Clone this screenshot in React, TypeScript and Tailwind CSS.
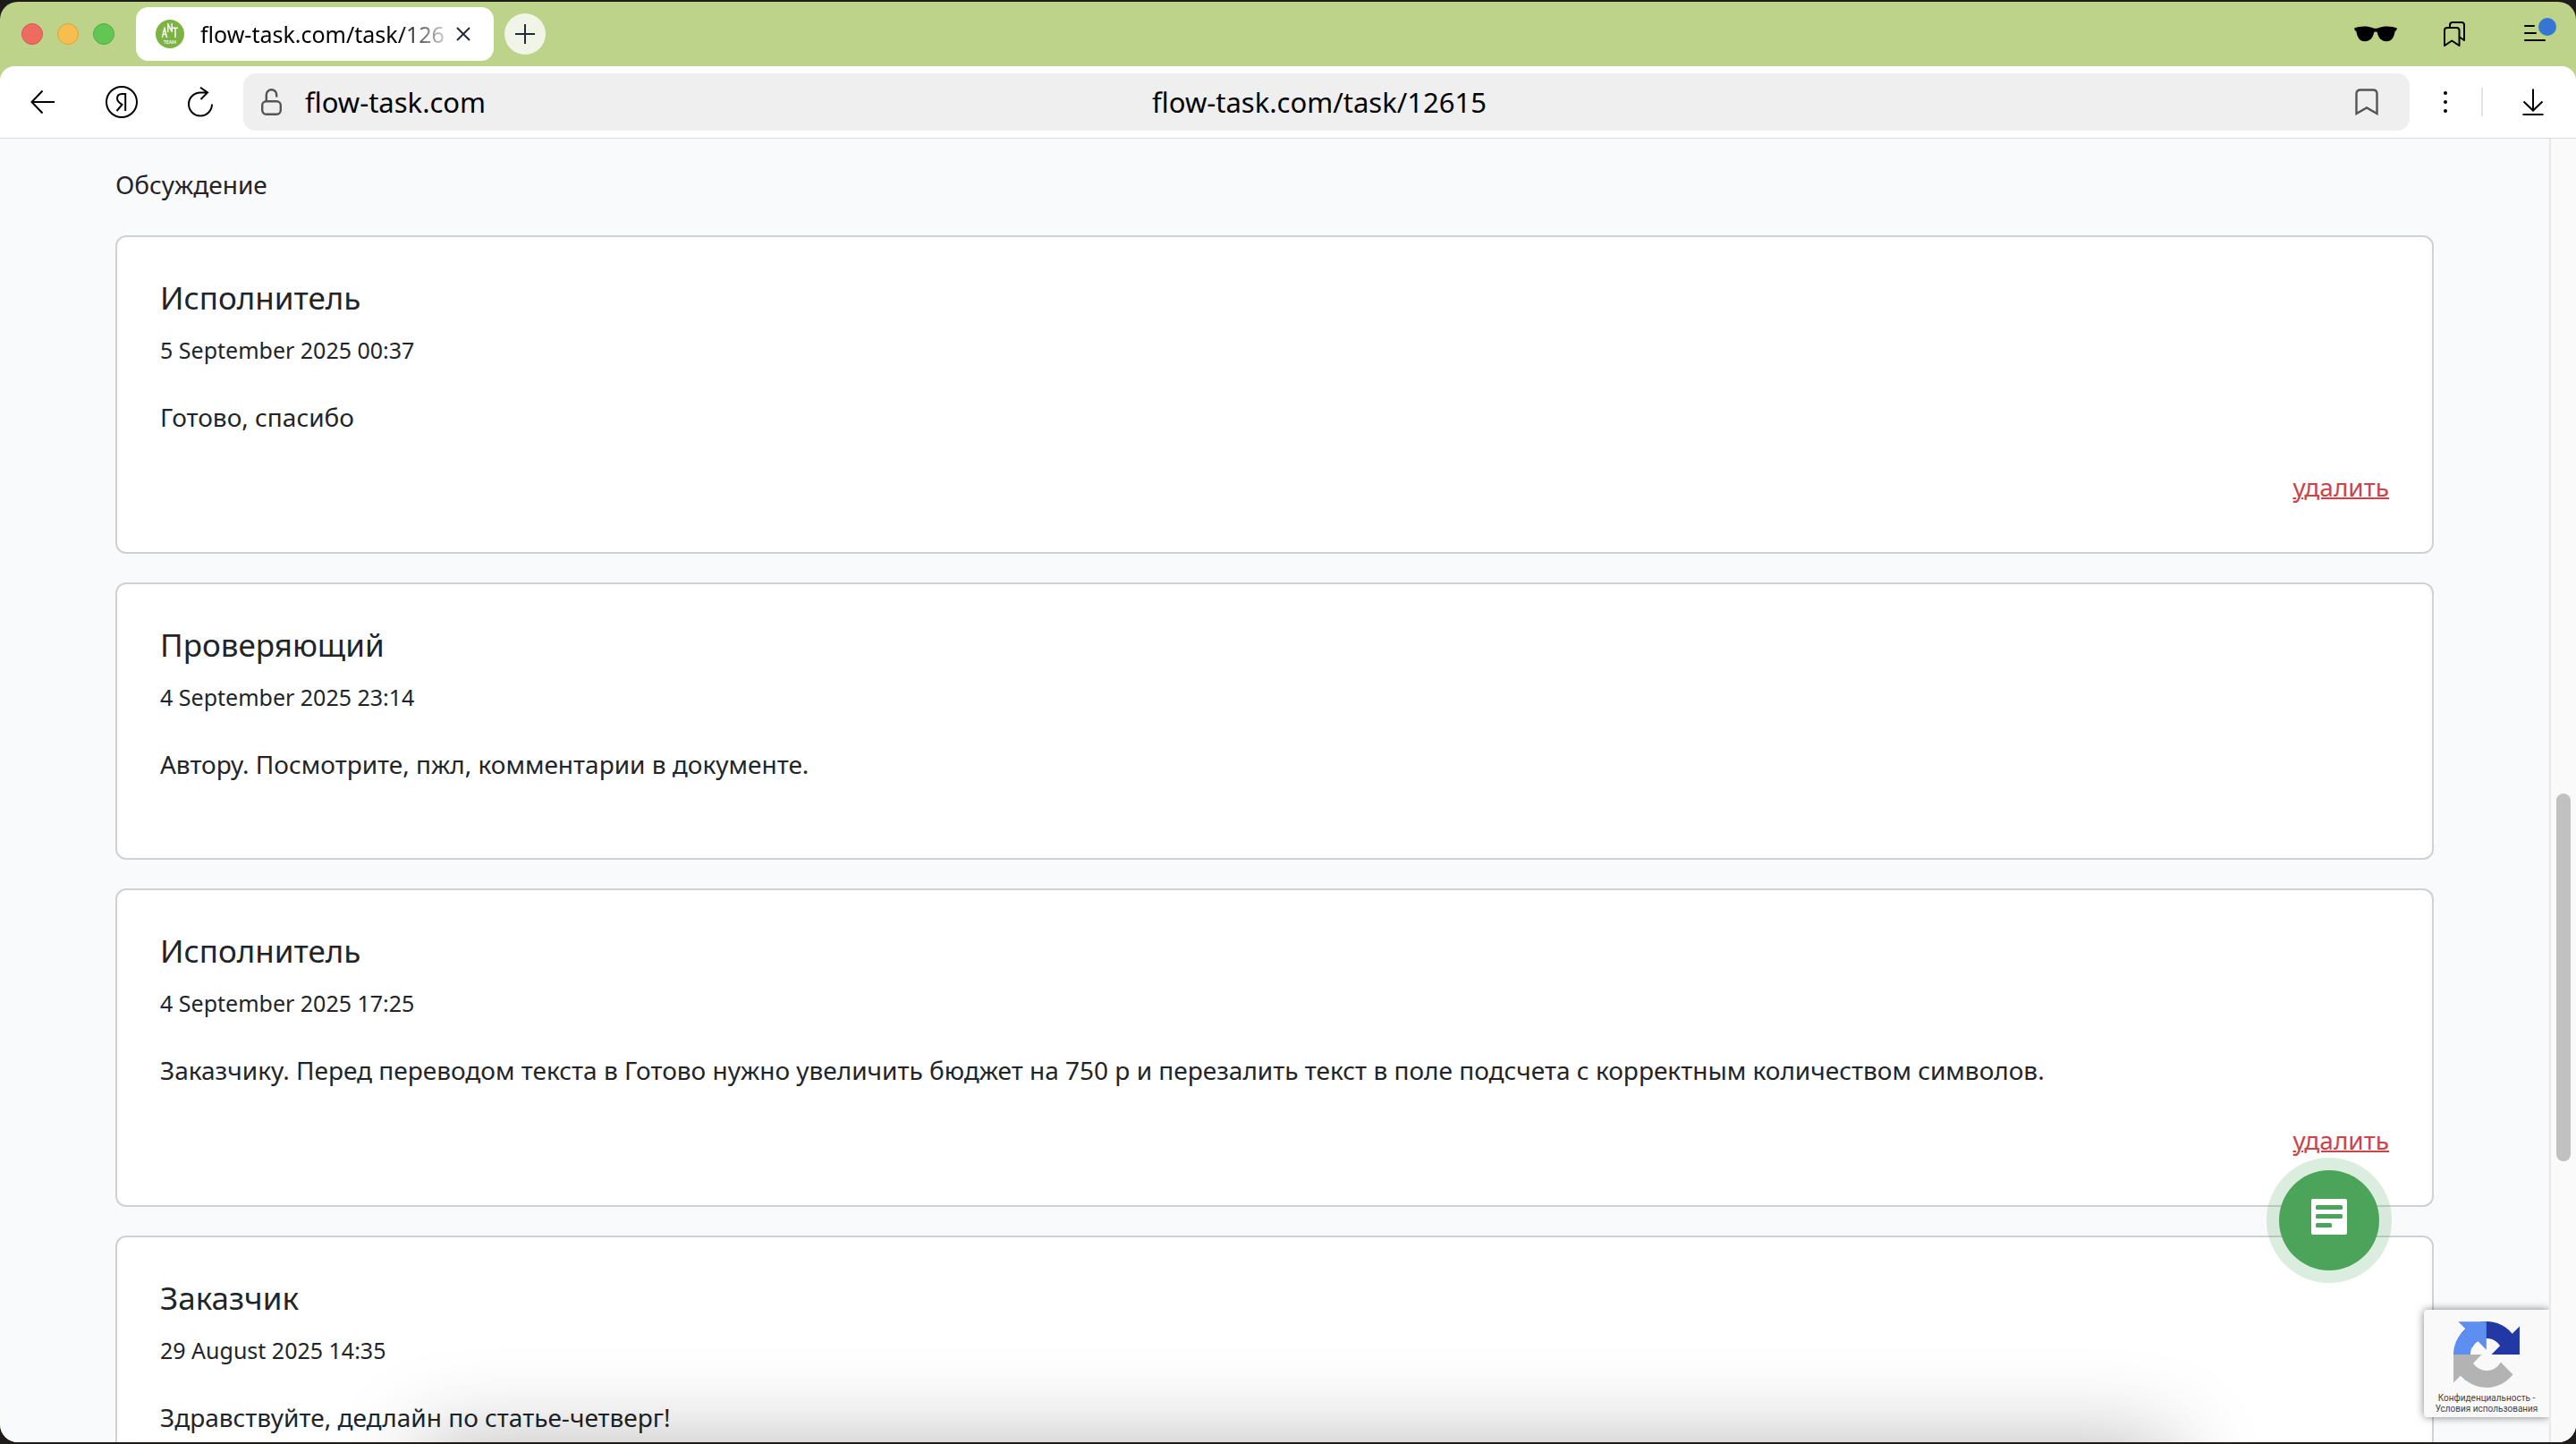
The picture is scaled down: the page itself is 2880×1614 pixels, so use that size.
import React from "react";

type Comment = {
  author: string;
  date: string;
  text: string;
  removable?: boolean;
};

const comments: Comment[] = [
  { author: "Исполнитель", date: "5 September 2025 00:37", text: "Готово, спасибо", removable: true },
  { author: "Проверяющий", date: "4 September 2025 23:14", text: "Автору. Посмотрите, пжл, комментарии в документе." },
  {
    author: "Исполнитель",
    date: "4 September 2025 17:25",
    text: "Заказчику. Перед переводом текста в Готово нужно увеличить бюджет на 750 р и перезалить текст в поле подсчета с корректным количеством символов.",
    removable: true,
  },
  { author: "Заказчик", date: "29 August 2025 14:35", text: "Здравствуйте, дедлайн по статье-четверг!" },
];

function IconButton({ label, children, className = "" }: { label: string; children: React.ReactNode; className?: string }) {
  return (
    <button type="button" aria-label={label} className={`flex shrink-0 items-center justify-center ${className}`}>
      {children}
    </button>
  );
}

function Favicon() {
  return (
    <svg viewBox="0 0 32 32" className="size-8 shrink-0" aria-hidden="true">
      <circle cx="16" cy="16" r="16" fill="#7cb342" />
      <g fill="none" stroke="#fff" strokeWidth="1.4" strokeLinecap="round" strokeLinejoin="round">
        <path d="M7.5 19.5 L10 9 L12.4 19.5 M8.3 16.4 H11.6" />
        <path d="M13.8 13.5 V4.5 L18.2 13.5 V4.5" />
        <path d="M19.6 9.2 H24.4 M22 9.2 V19.5" />
      </g>
      <text x="16" y="26.5" textAnchor="middle" fontSize="5" fontWeight="700" fill="#fff" fontFamily="Lato, sans-serif">
        TEAM
      </text>
    </svg>
  );
}

function TabBar() {
  return (
    <div className="flex h-[72px] shrink-0 items-center pr-[22px] pl-6">
      <div className="flex gap-4">
        <button type="button" aria-label="Закрыть окно" className="size-6 rounded-full border border-[#d9564c] bg-[#ed6b60]" />
        <button type="button" aria-label="Свернуть окно" className="size-6 rounded-full border border-[#dba23f] bg-[#f5be4f]" />
        <button type="button" aria-label="Развернуть окно" className="size-6 rounded-full border border-[#4fad42] bg-[#62c655]" />
      </div>
      <div className="ml-6 flex h-[60px] w-[400px] items-center rounded-[14px] bg-white pr-[26px] pl-[22px]">
        <Favicon />
        <div className="ml-[18px] min-w-0 flex-1 overflow-hidden bg-linear-to-r from-black from-80% to-black/15 bg-clip-text text-[25px] leading-8 whitespace-nowrap text-transparent">
          flow-task.com/task/126
        </div>
        <IconButton label="Закрыть вкладку" className="ml-[10px]">
          <svg viewBox="0 0 16 16" className="size-4" fill="none" stroke="#222b38" strokeWidth="2">
            <path d="M1 1 L15 15 M15 1 L1 15" />
          </svg>
        </IconButton>
      </div>
      <IconButton label="Новая вкладка" className="ml-3 size-[46px] rounded-full bg-[#f1f5e7]">
        <svg viewBox="0 0 22 22" className="size-[22px]" fill="none" stroke="#222b38" strokeWidth="2">
          <path d="M11 0 V22 M0 11 H22" />
        </svg>
      </IconButton>
      <div className="ml-auto flex items-center">
        <IconButton label="Режим инкогнито">
          <svg viewBox="0 0 48 18" className="h-[18px] w-12" fill="#000">
            <path d="M0 2.5 C5 0.2 15 -0.4 21 2.2 C23 3 25 3 27 2.2 C33 -0.4 43 0.2 48 2.5 L47 5.2 L45.6 6 C44.5 13 42 17.2 36 17.2 C29.5 17.2 27 12.5 25.8 7.6 C25.2 6.2 22.8 6.2 22.2 7.6 C21 12.5 18.5 17.2 12 17.2 C6 17.2 3.5 13 2.4 6 L1 5.2 Z" />
          </svg>
        </IconButton>
        <IconButton label="Коллекции" className="ml-[52px]">
          <svg viewBox="0 0 24 28" className="h-7 w-6" fill="none" stroke="#000" strokeWidth="2" strokeLinejoin="round">
            <path d="M1 27 V10 Q1 7 4 7 H14.5 Q17.5 7 17.5 10 V27 L9.2 21.5 Z" />
            <path d="M7 7 V4 Q7 1 10 1 H20 Q23 1 23 4 V21 L17.5 17.2" />
          </svg>
        </IconButton>
        <IconButton label="Меню" className="ml-16">
          <svg viewBox="0 0 38 40" className="h-10 w-[38px]" aria-hidden="true">
            <path d="M3 11 H13 M3 19 H15 M3 27 H25" stroke="#000" strokeWidth="2" strokeLinecap="round" />
            <circle cx="28" cy="12" r="10" fill="#3576d2" />
          </svg>
        </IconButton>
      </div>
    </div>
  );
}

function Toolbar() {
  return (
    <div className="flex h-[81px] shrink-0 items-center rounded-t-[16px] border-b border-[#d9dadb] bg-white pr-9 pl-[34px]">
      <IconButton label="Назад">
        <svg viewBox="0 0 28 28" className="size-7" fill="none" stroke="#000" strokeWidth="2">
          <path d="M27 14 H1.5 M13.5 1.5 L1.5 14 L13.5 26.5" />
        </svg>
      </IconButton>
      <IconButton label="Яндекс" className="ml-14">
        <svg viewBox="0 0 36 36" className="size-9" fill="none" stroke="#000" strokeWidth="2">
          <circle cx="18" cy="18" r="17" />
          <path d="M22.2 28 V9 H18.5 Q13 9 13 14 Q13 17 15.5 18.8 L18.5 21 L12.5 28" />
        </svg>
      </IconButton>
      <IconButton label="Обновить" className="ml-14">
        <svg viewBox="0 0 28 34" className="h-[34px] w-7" fill="none" stroke="#000" strokeWidth="2">
          <path d="M27 19.5 A13 13 0 1 1 14 6.5 H21.5 M14 0.8 L22 6.5 L14.5 14" />
        </svg>
      </IconButton>
      <div className="ml-[34px] flex h-16 min-w-0 flex-1 items-center rounded-[14px] bg-[#efefef] pr-[35px] pl-[19px]">
        <div className="flex w-80 shrink-0 items-center">
          <IconButton label="Сведения о сайте">
            <svg viewBox="0 0 26 32" className="h-8 w-[26px]" fill="none" stroke="#555" strokeWidth="2.4">
              <rect x="2.2" y="15.2" width="20.6" height="14.6" rx="4.5" />
              <path d="M6.8 15 V8 A5.7 5.7 0 0 1 18.2 8 V10.5" />
            </svg>
          </IconButton>
          <span className="ml-6 text-[31px] leading-10">flow-task.com</span>
        </div>
        <input
          aria-label="Адрес страницы"
          readOnly
          value="flow-task.com/task/12615"
          className="min-w-0 flex-1 bg-transparent text-center text-[31px] leading-10 outline-none"
        />
        <div className="flex w-80 shrink-0 justify-end">
          <IconButton label="В закладки">
            <svg viewBox="0 0 26 30" className="h-[30px] w-[26px]" fill="none" stroke="#555" strokeWidth="2.4">
              <path d="M1.5 28 V6 Q1.5 1.5 6 1.5 H20 Q24.5 1.5 24.5 6 V28 L13 21.5 Z" />
            </svg>
          </IconButton>
        </div>
      </div>
      <IconButton label="Ещё" className="ml-[30px]">
        <svg viewBox="0 0 20 24" className="h-6 w-5">
          <circle cx="10" cy="2" r="2" />
          <circle cx="10" cy="12" r="2" />
          <circle cx="10" cy="22" r="2" />
        </svg>
      </IconButton>
      <div className="ml-[30px] h-8 w-[2px] bg-[#e3e3e3]" />
      <IconButton label="Загрузки" className="ml-11">
        <svg viewBox="0 0 24 30" className="h-[30px] w-6" fill="none" stroke="#000" strokeWidth="2">
          <path d="M12 0.5 V24.5 M1.5 14.5 L12 24.5 L22.5 14.5 M0.5 29 H23.5" />
        </svg>
      </IconButton>
    </div>
  );
}

function CommentCard({ comment }: { comment: Comment }) {
  return (
    <article className="rounded-xl border-2 border-[#d0d1d3] bg-white px-12 py-12">
      <h2 className="text-[35px] leading-10">{comment.author}</h2>
      <p className="mt-5 text-[25px] leading-9">{comment.date}</p>
      <p className="my-9 text-[28px] leading-[42px]">{comment.text}</p>
      {comment.removable && (
        <div className="flex h-[46px] justify-end">
          <a href="#delete" className="text-[28px] leading-[42px] text-[#cb444a] underline decoration-2">
            удалить
          </a>
        </div>
      )}
    </article>
  );
}

function RecaptchaBadge() {
  return (
    <aside className="absolute right-0 bottom-7 flex h-[120px] w-[140px] flex-col items-center rounded-l bg-[#f9f9f9] pt-[13px] shadow-[0_0_10px_rgba(0,0,0,0.5)]">
      <svg viewBox="0 0 64 64" className="size-[74px]" aria-hidden="true">
        <path
          fill="#2138a5"
          d="M64 31.955l-.033-1.37V4.687l-7.16 7.16C50.948 4.674 42.033.093 32.05.093c-10.4 0-19.622 4.96-25.458 12.64l11.736 11.86a15.55 15.55 0 0 1 4.754-5.334c2.05-1.6 4.952-2.906 8.968-2.906.485 0 .86.057 1.135.163 4.976.393 9.288 3.14 11.828 7.124l-8.307 8.307L64 31.953"
        />
        <path
          fill="#5c8ff0"
          d="M31.862.094l-1.37.033H4.594l7.16 7.16C4.58 13.147 0 22.06 0 32.046c0 10.4 4.96 19.622 12.64 25.458L24.5 45.768a15.55 15.55 0 0 1-5.334-4.754c-1.6-2.05-2.906-4.952-2.906-8.968 0-.485.057-.86.163-1.135.393-4.976 3.14-9.288 7.124-11.828l8.307 8.307L31.86.095"
        />
        <path
          fill="#b3b3b3"
          d="M.001 32.045l.033 1.37v25.898l7.16-7.16c5.86 7.173 14.774 11.754 24.76 11.754 10.4 0 19.622-4.96 25.458-12.64l-11.736-11.86a15.55 15.55 0 0 1-4.754 5.334c-2.05 1.6-4.952 2.906-8.968 2.906-.485 0-.86-.057-1.135-.163-4.976-.393-9.288-3.14-11.828-7.124l8.307-8.307c-10.522.04-22.4.066-27.295-.005"
        />
      </svg>
      <div className="mt-1.5 text-center font-[Roboto,sans-serif] text-[10px] leading-3 whitespace-nowrap text-[#444]">
        <a href="#privacy">Конфиденциальность</a>
        <span> - </span>
        <br />
        <a href="#terms">Условия использования</a>
      </div>
    </aside>
  );
}

function ChatButton() {
  return (
    <button
      type="button"
      aria-label="Открыть чат"
      className="absolute right-44 bottom-[178px] flex size-[140px] items-center justify-center rounded-full bg-[#4ca45a]/20"
    >
      <span className="flex size-28 items-center justify-center rounded-full bg-[#4ca45a] pb-2">
        <svg viewBox="0 0 40 40" className="size-10" aria-hidden="true">
          <rect width="40" height="40" rx="2" fill="#fff" />
          <rect x="5" y="7" width="30" height="5" rx="1.5" fill="#4ca45a" />
          <rect x="5" y="17" width="30" height="5" rx="1.5" fill="#4ca45a" />
          <rect x="5" y="27" width="18" height="5" rx="1.5" fill="#4ca45a" />
        </svg>
      </span>
    </button>
  );
}

export default function App() {
  return (
    <div className="h-screen overflow-hidden bg-[#1d1c1a] py-[2px] font-['Noto_Sans',sans-serif] text-black">
      <div className="flex h-full flex-col overflow-hidden rounded-[20px] bg-[#bdd38a]">
        <TabBar />
        <Toolbar />
        <div className="flex min-h-0 flex-1 bg-[#f9fafc]">
          <div className="relative min-w-0 flex-1 overflow-hidden">
            <main className="px-[129px] pt-[30px] text-[#212529]">
              <h1 className="mb-9 text-[28px] leading-[42px]">Обсуждение</h1>
              <div className="flex flex-col gap-8">
                {comments.map((comment) => (
                  <CommentCard key={comment.date} comment={comment} />
                ))}
              </div>
            </main>
            <div className="pointer-events-none absolute top-full right-[420px] left-[470px] h-40 shadow-[0_0_100px_rgba(0,0,0,0.28)]" />
            <ChatButton />
            <RecaptchaBadge />
          </div>
          <div className="flex w-[30px] shrink-0 flex-col border-l-2 border-[#e7e8e9] bg-[#fafafa] pl-1.5">
            <div className="flex-[732]" />
            <div className="w-4 flex-[411] rounded-full bg-[#c1c1c1]" />
            <div className="flex-[314]" />
          </div>
        </div>
      </div>
    </div>
  );
}
